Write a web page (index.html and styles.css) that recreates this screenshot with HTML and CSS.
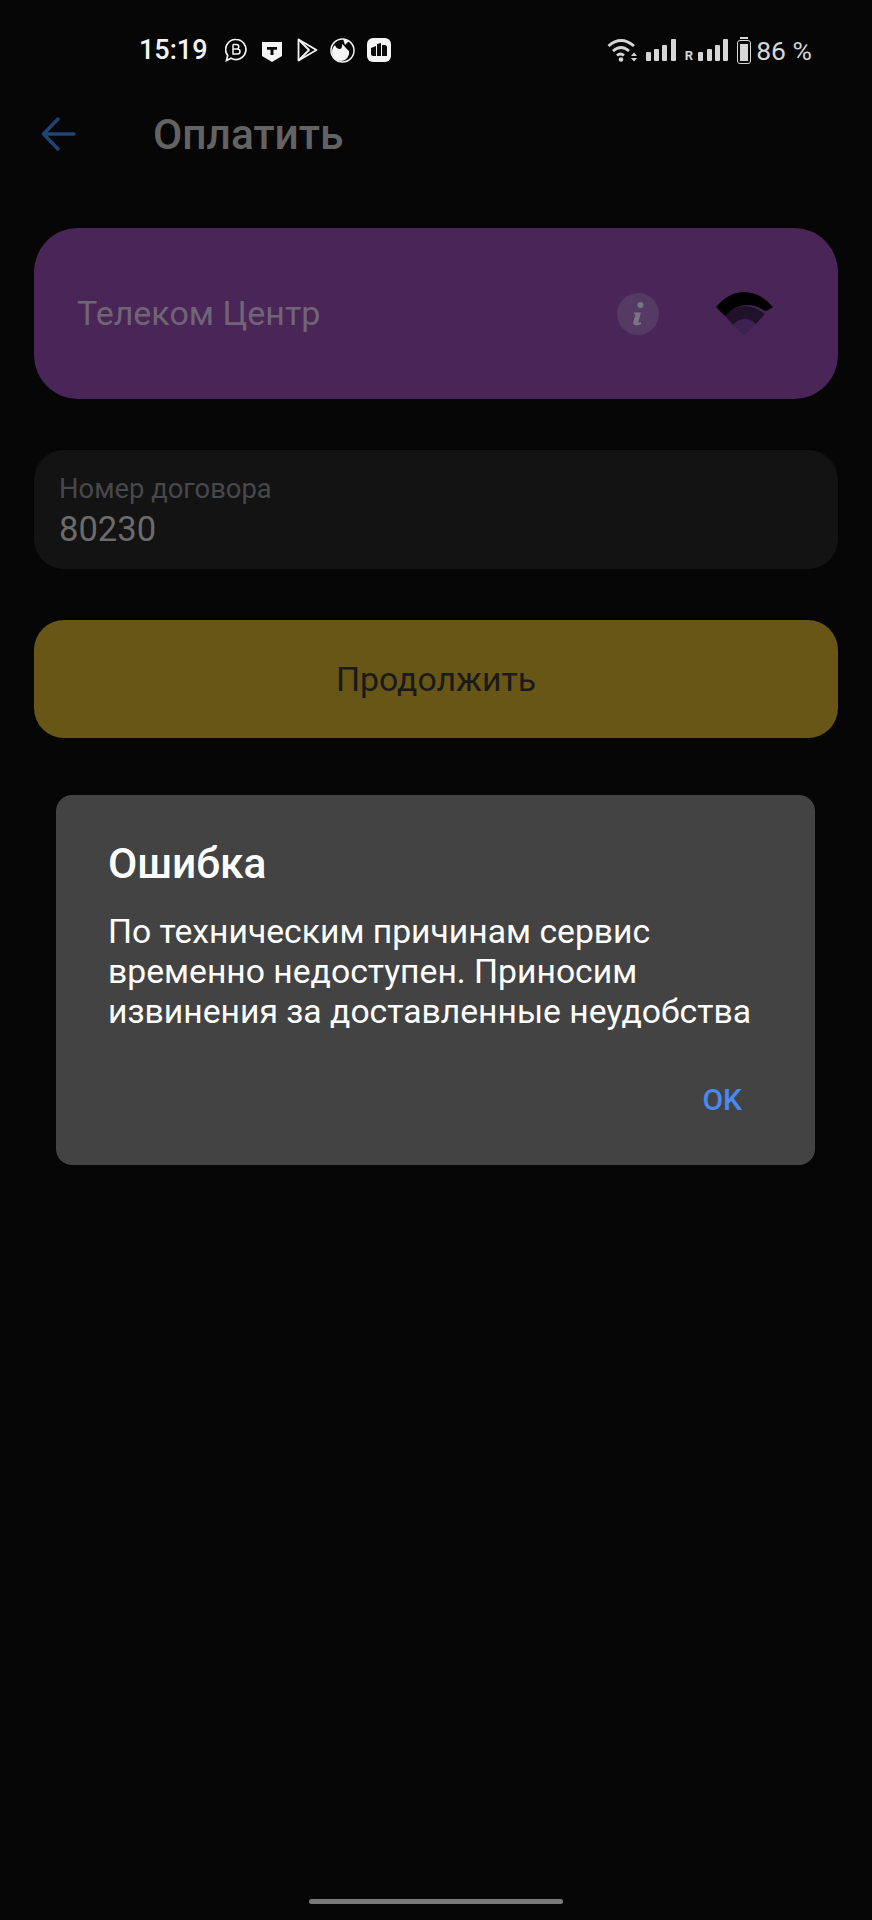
FILE: index.html
```html
<!DOCTYPE html>
<html lang="ru">
<head>
    <meta charset="UTF-8">
    <meta name="viewport" content="width=device-width, initial-scale=1.0">
    <title>Оплатить</title>
    <link rel="stylesheet" href="styles.css">
</head>
<body>
    <!-- Status bar -->
    <div class="status-bar">
        <div class="status-left">
            <span class="clock">15:19</span>
            <svg class="note-icon" width="22" height="24" viewBox="0 0 22 24" fill="none" stroke="#f4f4f4" stroke-width="1.7"><path d="M11 1.500a10 10 0 1 1-5 18.700L1.500 22.500l1.200-5A10 10 0 0 1 11 1.500z"/><path d="M8 6.500v9.500h4.500a2.500 2.500 0 0 0 0-5H8M8 6.500h3.500a2.200 2.200 0 0 1 0 4.500" stroke-width="1.500"/></svg>
            <svg class="note-icon spaced" width="20" height="24" viewBox="0 0 20 24"><path d="M0 4h20v14l-10 6-10-6z" fill="#f4f4f4"/><path d="M5 9h10v2.800h-3.500V17h-3v-5.200H5z" fill="#0a0a0a"/></svg>
            <svg class="note-icon spaced" width="21" height="24" viewBox="0 0 21 24" fill="none" stroke="#f4f4f4" stroke-width="1.800" stroke-linejoin="round"><path d="M1.500 1.500L19.500 12 1.500 22.500z"/><path d="M1.500 1.500L12 12 1.500 22.500"/></svg>
            <svg class="note-icon" width="25" height="25" viewBox="0 0 25 25"><circle cx="12.500" cy="12.500" r="11.500" fill="none" stroke="#f4f4f4" stroke-width="1.500"/><path d="M12 6c3 2 4 5 7 7 1 5-3 10-8 10-5 0-9-4-9-9 0-3 1-5 3-7 1 3 3 4 5 4 2 0 2-3 2-5z" fill="#f4f4f4"/><path d="M13 1l2 6 4-4z" fill="#f4f4f4"/></svg>
            <svg class="note-icon" width="24" height="24" viewBox="0 0 24 24"><rect width="24" height="24" rx="6" fill="#f4f4f4"/><path d="M4 10l5-2v10H6c-1 0-2-1-2-2zM10 6l4-1v13h-4zM15 7h3c1 0 2 1 2 2v9h-5z" fill="#0a0a0a"/></svg>
        </div>
        <div class="status-right">
            <svg class="wifi" width="31" height="25" viewBox="0 0 31 25" fill="none" stroke="#d6d6d6" stroke-width="2.800"><path d="M1.500 8Q14-3 27 8M6 13Q14 6 22 13M10 17.500Q13.500 14.500 17 17.500"/><circle cx="14" cy="21.500" r="2.300" fill="#d6d6d6" stroke="none"/><path d="M24 18l3-3.500 3 3.500zM24 20h6l-3 3.500z" fill="#d6d6d6" stroke="none"/></svg>
            <div class="signal">
                <i class="bar-1"></i><i class="bar-2"></i><i class="bar-3"></i><i class="bar-4"></i>
            </div>
            <div class="signal">
                <span class="roaming">R</span>
                <i class="bar-1"></i><i class="bar-2"></i><i class="bar-3"></i><i class="bar-4"></i>
            </div>
            <div class="battery"><div class="battery-fill"></div></div>
            <span class="percent">86 %</span>
        </div>
    </div>

    <!-- Page header -->
    <header class="page-header">
        <svg class="back-icon" width="36" height="34" viewBox="0 0 36 34" fill="none" stroke="#1f4576" stroke-width="3.400" stroke-linecap="round" stroke-linejoin="round"><path d="M33 17H3M17 2L2.500 17 17 32"/></svg>
        <h1>Оплатить</h1>
    </header>

    <!-- Main content -->
    <main>
        <div class="provider-card">
            <span class="provider-name">Телеком Центр</span>
            <svg class="info-badge" width="42" height="42" viewBox="0 0 42 42">
                <circle cx="21" cy="21" r="21" fill="#553a63"/>
                <circle cx="23.500" cy="12" r="3" fill="#7c7482"/>
                <path d="M17 19.500h7l-2.500 9c-.3 1 .5 1.500 2.500.5v2c-2 1.500-8 2.500-8-1.500l2.500-8H17z" fill="#7c7482"/>
            </svg>
            <svg class="provider-logo" width="57" height="43" viewBox="0 0 57 43">
                <path d="M17 33Q28 21 40 32L28 43z" fill="#3d2150"/>
                <path d="M9 24Q27 5 49 22L40 32Q28 21 17 33z" fill="#22112a"/>
                <path d="M0 15Q13 0 28 0 44 0 57 15 53 18 49 19 27 5 9 24z" fill="#000"/>
            </svg>
        </div>

        <div class="contract-field">
            <span class="field-label">Номер договора</span>
            <span class="field-value">80230</span>
        </div>

        <button class="continue-btn">Продолжить</button>
    </main>

    <!-- Error dialog -->
    <div class="dialog">
        <h2>Ошибка</h2>
        <p>По техническим причинам сервис временно недоступен. Приносим извинения за доставленные неудобства</p>
        <div class="dialog-actions">
            <button class="ok-btn">OK</button>
        </div>
    </div>

    <div class="home-bar"></div>
</body>
</html>
```

FILE: styles.css
```css
/* General page styling */
body {
    font-family: Roboto, 'Noto Sans', sans-serif;
    margin: 0;
    padding: 0;
    width: 872px;
    height: 1920px;
    overflow: hidden;
    position: relative;
    background: #060606;
}

/* Status bar */
.status-bar {
    display: flex;
    justify-content: space-between;
    align-items: center;
    height: 50px;
    padding: 25px 60px 0 139px;
}

.status-left {
    display: flex;
    align-items: center;
    gap: 12px;
}

.clock {
    color: #f4f4f4;
    font-size: 27px;
    font-weight: 500;
    margin-right: 5px;
}

.spaced {
    margin-left: 3px;
}

.status-right {
    display: flex;
    align-items: center;
    gap: 9px;
}

.wifi {
    margin-right: -1px;
}

.signal {
    display: flex;
    align-items: flex-end;
    gap: 3.300px;
    height: 22px;
}

.signal i {
    display: block;
    width: 5px;
    background: #d6d6d6;
    border-radius: 1px;
}

.bar-1 { height: 9px; }
.bar-2 { height: 12px; }
.bar-3 { height: 16px; }
.bar-4 { height: 22px; }

.roaming {
    color: #d6d6d6;
    font-size: 13px;
    font-weight: 700;
    line-height: 10px;
    margin-right: 2px;
}

.battery {
    position: relative;
    box-sizing: border-box;
    width: 14px;
    height: 24px;
    margin-top: 4px;
    border: 1px solid #d6d6d6;
    border-radius: 3px;
    padding: 3px 2px 2px;
    display: flex;
}

.battery::before {
    content: "";
    position: absolute;
    top: -4px;
    left: 2px;
    width: 8px;
    height: 2px;
    background: #d6d6d6;
}

.battery-fill {
    flex: 1;
    background: #d6d6d6;
}

.percent {
    margin-left: -4px;
    color: #d6d6d6;
    font-size: 26.500px;
    font-weight: 400;
}

/* Page header */
.page-header {
    display: flex;
    align-items: center;
    height: 60px;
    padding: 29px 0 0 41px;
}

.page-header h1 {
    margin: 0 0 0 76px;
    color: #636363;
    font-size: 42.500px;
    font-weight: 500;
}

/* Main content */
main {
    display: flex;
    flex-direction: column;
    padding: 64px 34px 0;
}

.provider-card {
    display: flex;
    align-items: center;
    height: 171px;
    padding: 0 65px 0 43px;
    border-radius: 44px;
    background: #4a2558;
}

.provider-name {
    flex: 1;
    padding-bottom: 2px;
    color: #706575;
    font-size: 34px;
}

.info-badge {
    margin-right: 57px;
}

.contract-field {
    display: flex;
    flex-direction: column;
    box-sizing: border-box;
    height: 119px;
    margin-top: 51px;
    padding: 22px 25px 0;
    border-radius: 30px;
    background: #131313;
}

.field-label {
    color: #46484b;
    font-size: 27.400px;
    line-height: 35px;
}

.field-value {
    color: #6b6b6b;
    font-size: 34.600px;
    line-height: 44px;
}

.continue-btn {
    height: 118px;
    margin-top: 51px;
    border: none;
    border-radius: 30px;
    background: #675615;
    color: #1a1a1a;
    font-family: inherit;
    font-size: 33.800px;
}

/* Error dialog */
.dialog {
    position: absolute;
    top: 795px;
    left: 56px;
    box-sizing: border-box;
    width: 759px;
    height: 370px;
    padding: 45px 52px 0;
    border-radius: 16px;
    background: #434343;
}

.dialog h2 {
    margin: 0;
    color: #ffffff;
    font-size: 42.500px;
    font-weight: 500;
    line-height: 48px;
}

.dialog p {
    margin: 24px 0 0;
    color: #ffffff;
    font-size: 33.700px;
    line-height: 40px;
}

.dialog-actions {
    display: flex;
    justify-content: flex-end;
    margin-top: 50px;
}

.ok-btn {
    padding: 0;
    margin-right: 21px;
    border: none;
    background: none;
    color: #4a8af0;
    font-family: inherit;
    font-size: 30px;
    font-weight: 500;
}

/* Gesture bar */
.home-bar {
    position: absolute;
    left: 309px;
    top: 1899px;
    width: 254px;
    height: 5px;
    border-radius: 3px;
    background: #7a7a7a;
}
```
